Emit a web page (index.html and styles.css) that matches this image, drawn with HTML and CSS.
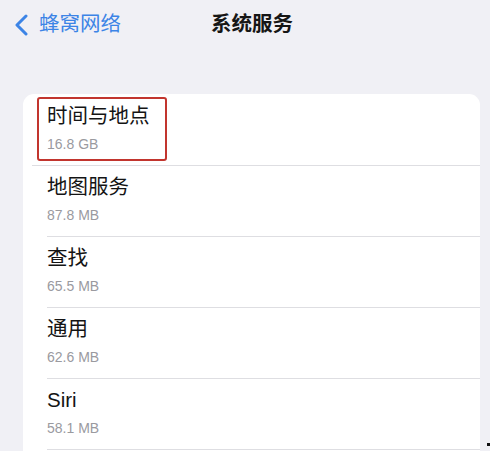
FILE: index.html
```html
<!DOCTYPE html>
<html lang="zh-CN">
<head>
<meta charset="utf-8">
<link rel="stylesheet" href="styles.css">
</head>
<body>
<div class="screen">
  <header class="nav">
    <a class="back">
      <svg class="chev" width="14" height="22" viewBox="0 0 14 22"><path d="M12 2 L3 11 L12 20" fill="none" stroke="#3c84e6" stroke-width="3" stroke-linecap="round" stroke-linejoin="round"/></svg>
      <span>蜂窝网络</span>
    </a>
    <h1 class="title">系统服务</h1>
    <div></div>
  </header>
  <section class="card">
    <div class="row first">
      <div class="name">时间与地点</div>
      <div class="size">16.8 GB</div>
      <div class="mark"></div>
    </div>
    <div class="row">
      <div class="name">地图服务</div>
      <div class="size">87.8 MB</div>
    </div>
    <div class="row">
      <div class="name">查找</div>
      <div class="size">65.5 MB</div>
    </div>
    <div class="row">
      <div class="name">通用</div>
      <div class="size">62.6 MB</div>
    </div>
    <div class="row">
      <div class="name">Siri</div>
      <div class="size">58.1 MB</div>
    </div>
  </section>
  <div class="dot"></div>
</div>
</body>
</html>
```
FILE: styles.css
```css
html, body {
  margin: 0;
  padding: 0;
  height: 451px;
  overflow: hidden;
  background: #f0f0f5;
}
.screen {
  position: relative;
  height: 451px;
  overflow: hidden;
  font-family: "Liberation Sans", "Noto Sans CJK SC", sans-serif;
}
.nav {
  display: grid;
  grid-template-columns: 1fr auto 1fr;
  align-items: center;
  height: 48px;
  padding: 0 0 0 14px;
}
.back {
  display: flex;
  align-items: center;
  gap: 11px;
  color: #3c84e6;
  font-size: 20.5px;
  line-height: 26px;
}
.chev { display: block; margin-top: 1px; }
.title {
  margin: 0;
  font-size: 20.5px;
  line-height: 26px;
  font-weight: 700;
  color: #161616;
}
.card {
  margin: 46px 10px 0 23px;
  padding-bottom: 30px;
  background: #fff;
  border-radius: 11px;
}
.row {
  position: relative;
  padding: 9px 0 12px 24px;
}
.row::after {
  content: "";
  position: absolute;
  left: 24px;
  right: 0;
  bottom: -1px;
  height: 1px;
  background: #dedee2;
}
.row + .row { margin-top: 1px; padding-top: 8px; }
.row.first::after { left: 9px; }
.name {
  font-size: 20.5px;
  line-height: 26px;
  color: #141414;
}
.size {
  margin-top: 6px;
  font-size: 14px;
  line-height: 18px;
  color: #9a9a9f;
}
.mark {
  position: absolute;
  left: 14px;
  top: 3px;
  width: 126px;
  height: 60px;
  border: 2px solid #c2352e;
  border-radius: 3px;
}
.dot {
  position: absolute;
  left: 487px;
  top: 443px;
  width: 3px;
  height: 3px;
  background: #111;
}
```
